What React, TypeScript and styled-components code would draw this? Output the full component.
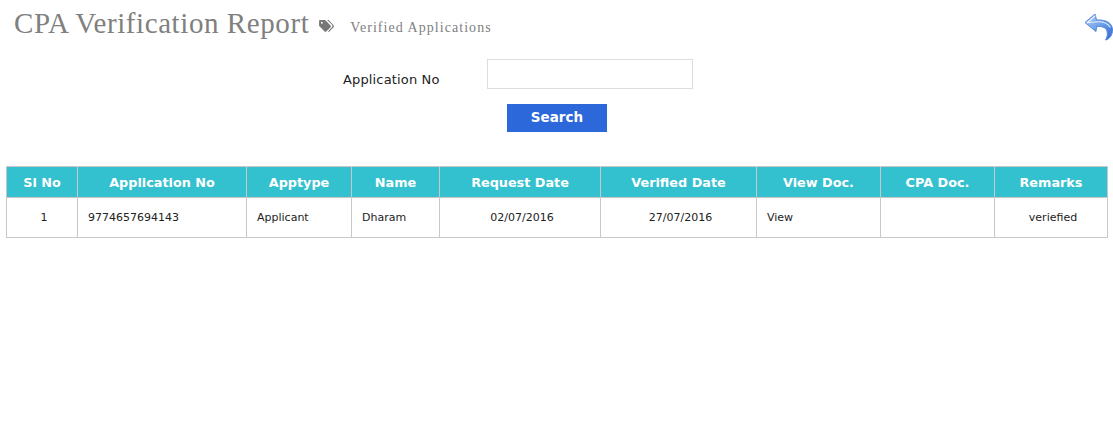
import React from 'react';
import styled, { createGlobalStyle } from 'styled-components';

const GlobalStyle = createGlobalStyle`
  html, body {
    margin: 0;
    padding: 0;
    background: #fff;
  }
`;

const Page = styled.div`
  width: 1113px;
  height: 422px;
  overflow: hidden;
  font-family: "DejaVu Sans", Verdana, sans-serif;
`;

const TitleBar = styled.div`
  height: 50px;
  display: flex;
  align-items: flex-start;
  justify-content: space-between;
  padding: 6px 0 0 14px;
  box-sizing: border-box;
`;

const TitleGroup = styled.div`
  display: flex;
  align-items: center;
  height: 34px;
`;

const Title = styled.h1`
  margin: 0;
  font-family: "Liberation Serif", "Times New Roman", serif;
  font-weight: 400;
  font-size: 29px;
  letter-spacing: 0.58px;
  color: #808080;
`;

const TagIcon = styled.svg`
  width: 15px;
  height: 13px;
  margin: 7px 0 0 10px;
  fill: #777;
`;

const SubTitle = styled.span`
  margin: 9px 0 0 16px;
  font-family: "Liberation Serif", "Times New Roman", serif;
  font-size: 14px;
  letter-spacing: 1.05px;
  color: #808080;
`;

const BackIcon = styled.svg`
  width: 29px;
  height: 28px;
  margin: 7px 0 0 0;
`;

const SearchRow = styled.div`
  display: flex;
  align-items: center;
  height: 30px;
  margin-top: 9px;
  padding-left: 343px;
`;

const FieldLabel = styled.label`
  width: 144px;
  font-size: 13px;
  letter-spacing: 0.15px;
  color: #222;
  padding-top: 11px;
`;

const TextInput = styled.input`
  width: 206px;
  height: 30px;
  box-sizing: border-box;
  border: 1px solid #ddd;
  background: #fff;
  outline: none;
`;

const ButtonRow = styled.div`
  display: flex;
  padding-left: 507px;
  margin-top: 15px;
`;

const SearchButton = styled.button`
  width: 100px;
  height: 28px;
  border: none;
  padding: 0 0 2px;
  background: #2d68db;
  color: #fff;
  font-family: "DejaVu Sans", Verdana, sans-serif;
  font-size: 13.5px;
  font-weight: 700;
`;

const Report = styled.table`
  width: 1101px;
  margin: 34px 0 0 6px;
  border-collapse: collapse;
  table-layout: fixed;
`;

const HeadCell = styled.th`
  height: 31px;
  padding: 0;
  box-sizing: border-box;
  background: #33c1cf;
  border: 1px solid #c8c8c8;
  color: #fff;
  font-size: 12.8px;
  font-weight: 700;
  text-align: center;
`;

const Cell = styled.td<{ $left?: boolean }>`
  height: 39px;
  padding: ${p => (p.$left ? '0 0 0 10px' : '0 0 0 4px')};
  border: 1px solid #c8c8c8;
  color: #222;
  font-size: 11px;
  text-align: ${p => (p.$left ? 'left' : 'center')};
`;

const columns = [
  { title: 'Sl No', width: 71 },
  { title: 'Application No', width: 169 },
  { title: 'Apptype', width: 105 },
  { title: 'Name', width: 88 },
  { title: 'Request Date', width: 161 },
  { title: 'Verified Date', width: 156 },
  { title: 'View Doc.', width: 124 },
  { title: 'CPA Doc.', width: 114 },
  { title: 'Remarks', width: 113 },
];

const App = () => {
  return (
    <Page>
      <GlobalStyle />
      <TitleBar>
        <TitleGroup>
          <Title>CPA Verification Report</Title>
          <TagIcon viewBox="0 0 16 14">
            <path d="M0 1.2C0 .5.5 0 1.2 0h4.6c.4 0 .7.1 1 .4l5.6 5.6c.5.5.5 1.3 0 1.8l-4.6 4.6c-.5.5-1.3.5-1.8 0L.4 6.8C.1 6.5 0 6.2 0 5.8V1.2zm3 2.8a1 1 0 1 0 0-2 1 1 0 0 0 0 2z" fillRule="evenodd" />
            <path d="M8.6 0h1c.4 0 .7.1 1 .4l5 5.2c.5.6.5 1.5 0 2.1l-4.4 4.6c-.4.4-1 .4-1.4 0l-.1-.1 4-4.2c.9-.9.9-2.3 0-3.2L8.6 0z" />
          </TagIcon>
          <SubTitle>Verified Applications</SubTitle>
        </TitleGroup>
        <BackIcon viewBox="0 0 29 28">
          <defs>
            <linearGradient id="backFill" x1="0" y1="0" x2="1" y2="1">
              <stop offset="0" stopColor="#bcd5f8" />
              <stop offset="0.5" stopColor="#6d9fe8" />
              <stop offset="1" stopColor="#2f68cc" />
            </linearGradient>
          </defs>
          <path
            d="M11 1 1 9.5 12 18.5 12.5 13.5C18 13 22 14.5 23 18 24 21.5 23 25 21.5 27 26 26 28.5 21.5 28.5 17 28.5 10.5 23 6.5 12.5 7Z"
            fill="url(#backFill)"
            stroke="#4f86db"
            strokeWidth="1"
            strokeLinejoin="round"
          />
          <path d="M11 3 3.5 9.5 11 9C17 8.2 23 9.5 26 14" fill="none" stroke="#e6effd" strokeWidth="1.2" strokeLinecap="round" />
        </BackIcon>
      </TitleBar>

      <SearchRow>
        <FieldLabel htmlFor="appno">Application No</FieldLabel>
        <TextInput id="appno" type="text" />
      </SearchRow>
      <ButtonRow>
        <SearchButton type="button">Search</SearchButton>
      </ButtonRow>

      <Report>
        <colgroup>
          {columns.map(c => (
            <col key={c.title} width={c.width} />
          ))}
        </colgroup>
        <thead>
          <tr>
            {columns.map(c => (
              <HeadCell key={c.title}>{c.title}</HeadCell>
            ))}
          </tr>
        </thead>
        <tbody>
          <tr>
            <Cell>1</Cell>
            <Cell $left>9774657694143</Cell>
            <Cell $left>Applicant</Cell>
            <Cell $left>Dharam</Cell>
            <Cell>02/07/2016</Cell>
            <Cell>27/07/2016</Cell>
            <Cell $left>View</Cell>
            <Cell></Cell>
            <Cell>veriefied</Cell>
          </tr>
        </tbody>
      </Report>
    </Page>
  );
};

export default App;
